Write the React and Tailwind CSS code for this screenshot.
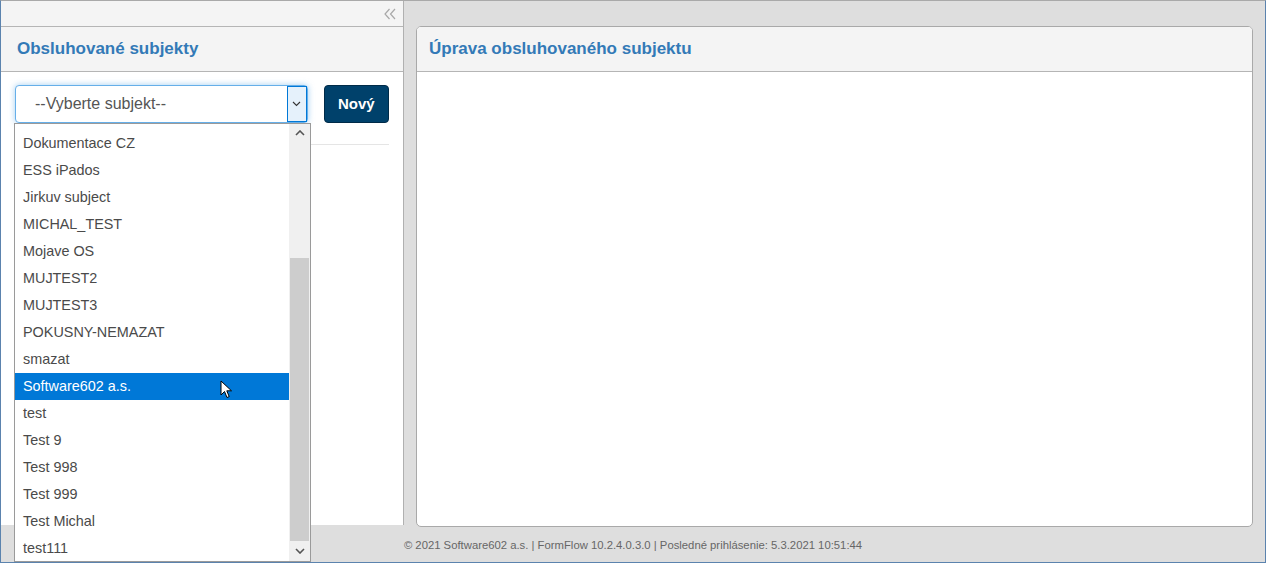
import React from "react";

const items = [
  "Dokumentace CZ",
  "ESS iPados",
  "Jirkuv subject",
  "MICHAL_TEST",
  "Mojave OS",
  "MUJTEST2",
  "MUJTEST3",
  "POKUSNY-NEMAZAT",
  "smazat",
  "Software602 a.s.",
  "test",
  "Test 9",
  "Test 998",
  "Test 999",
  "Test Michal",
  "test111",
];

const font = { fontFamily: '"Liberation Sans", Arial, sans-serif' };

const Cursor = () => (
  <svg width="14" height="20" viewBox="0 0 14 20" className="absolute left-[205px] top-[7px]">
    <path d="M1 1 L1 15 L4.5 11.5 L7 17.5 L9.2 16.6 L6.8 10.8 L11.5 10.8 Z" fill="#fff" stroke="#000" strokeWidth="1" strokeLinejoin="round" />
  </svg>
);

const App = () => {
  return (
    <div
      className="relative w-[1266px] h-[563px] bg-[#dedede] border-t border-t-[#a9a9a9] border-x border-b border-x-[#5b83ae] border-b-[#5b83ae] overflow-hidden flex flex-col"
      style={font}
    >
      <div className="flex h-[524px]">
        {/* left panel */}
        <div className="w-[403px] bg-white border-r border-[#b0b0b0] flex flex-col">
          <div className="h-[26px] bg-[#f4f4f4] border-b border-[#b5b5b5] flex justify-end items-center pr-[6px]">
            <svg width="14" height="12" viewBox="0 0 14 12" fill="none" stroke="#a8a8a8" strokeWidth="1.2">
              <path d="M6.5 1 L2 6 L6.5 11" />
              <path d="M12 1 L7.5 6 L12 11" />
            </svg>
          </div>
          <div className="h-[45px] bg-[#f4f4f4] border-b border-[#b5b5b5] flex items-center pl-[16px]">
            <span className="text-[17px] font-bold text-[#337ab7]">Obsluhované subjekty</span>
          </div>
          <div className="flex-1 px-[14px] pt-[13px]">
            <div className="flex items-center gap-[16px]">
              <div className="relative w-[295px] h-[38px] rounded-[4px] border border-[#66afe9] bg-white shadow-[0_0_6px_rgba(102,175,233,0.6)] flex items-center">
                <span className="pl-[19px] text-[16px] text-[#555]">--Vyberte subjekt--</span>
                <div className="absolute right-0 top-0 bottom-0 w-[20px] bg-[#e5f1fb] border border-[#0078d7] flex items-center justify-center">
                  <svg width="9" height="6" viewBox="0 0 9 6" fill="none" stroke="#333" strokeWidth="1.1">
                    <path d="M1 1 L4.5 4.5 L8 1" />
                  </svg>
                </div>
              </div>
              <button className="w-[66px] h-[38px] rounded-[4px] bg-[#00416b] border border-[#002b48] text-white font-bold text-[15px]">
                Nový
              </button>
            </div>
            <div className="mt-[21px] border-t border-[#e5e5e5]" />
          </div>
        </div>

        {/* right panel */}
        <div className="flex-1 ml-[12px] mr-[12px] mt-[25px] mb-[-2px] bg-white border border-[#a9a9a9] rounded-[5px] overflow-hidden flex flex-col">
          <div className="h-[45px] bg-[#f4f4f4] border-b border-[#b5b5b5] flex items-center pl-[12px]">
            <span className="text-[17px] font-bold text-[#337ab7]">Úprava obsluhovaného subjektu</span>
          </div>
          <div className="flex-1" />
        </div>
      </div>

      {/* footer */}
      <div className="flex-1 flex items-center justify-center pt-[4px]">
        <span className="text-[11.3px] text-[#666]">
          © 2021 Software602 a.s. | FormFlow 10.2.4.0.3.0 | Posledné prihlásenie: 5.3.2021 10:51:44
        </span>
      </div>

      {/* open dropdown list */}
      <div className="absolute left-[13px] top-[122px] w-[297px] h-[439px] bg-white border border-[#9a9a9a] flex">
        <div className="flex-1 pt-[6px] overflow-hidden">
          {items.map((t) => (
            <div
              key={t}
              className={`relative h-[27px] flex items-center pl-[8px] text-[14.4px] ${
                t === "Software602 a.s." ? "bg-[#0078d7] text-white" : "text-[#4a4a4a]"
              }`}
            >
              {t}
              {t === "Software602 a.s." && <Cursor />}
            </div>
          ))}
        </div>
        <div className="w-[21px] bg-[#f0f0f0] flex flex-col">
          <div className="h-[18px] flex items-center justify-center">
            <svg width="10" height="6" viewBox="0 0 10 6" fill="none" stroke="#555" strokeWidth="1.6">
              <path d="M1 5 L5 1 L9 5" />
            </svg>
          </div>
          <div className="flex-1 flex flex-col px-[1px]">
            <div className="h-[116px]" />
            <div className="flex-1 bg-[#cdcdcd]" />
          </div>
          <div className="h-[20px] flex items-center justify-center">
            <svg width="10" height="6" viewBox="0 0 10 6" fill="none" stroke="#555" strokeWidth="1.6">
              <path d="M1 1 L5 5 L9 1" />
            </svg>
          </div>
        </div>
      </div>
    </div>
  );
};

export default App;
